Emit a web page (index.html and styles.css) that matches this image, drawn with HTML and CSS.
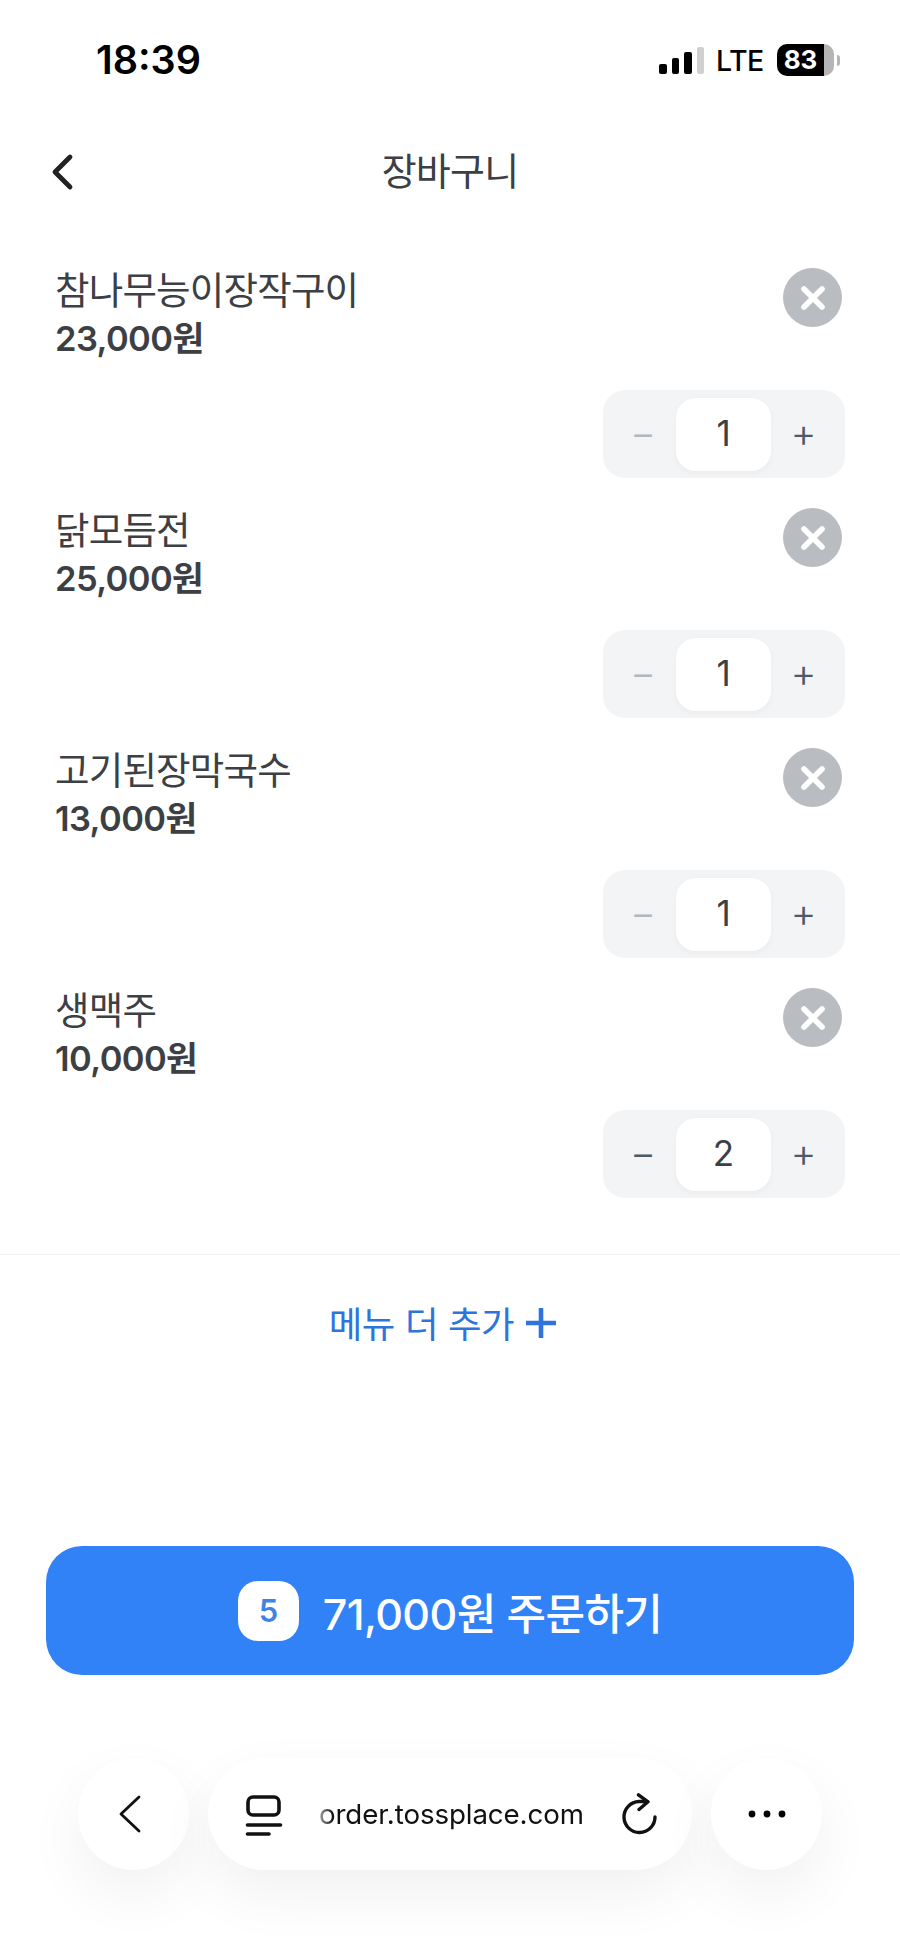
FILE: index.html
```html
<!DOCTYPE html>
<html lang="ko">

<head>
    <meta charset="UTF-8">
    <meta name="viewport" content="width=device-width, initial-scale=1.0">
    <title>장바구니</title>
    <link rel="stylesheet" href="styles.css">
</head>

<body>
    <div class="page">
        <div class="status">
            <span class="time">18:39</span>
            <div class="status-right">
                <div class="signal">
                    <i class="b1"></i><i class="b2"></i><i class="b3"></i><i class="b4"></i>
                </div>
                <span class="lte">LTE</span>
                <div class="battery"><span class="level">83</span></div>
                <div class="nub"></div>
            </div>
        </div>

        <div class="header">
            <svg class="header-back" width="30" height="38" viewBox="0 0 30 38">
                <path d="M24 4 L9 19 L24 34" />
            </svg>
            <h1 class="header-title">장바구니</h1>
        </div>

        <div class="items">
            <div class="item">
                <div class="item-head">
                    <div>
                        <div class="item-name">참나무능이장작구이</div>
                        <div class="item-price">23,000원</div>
                    </div>
                    <div class="remove">
                        <svg width="26" height="26" viewBox="0 0 26 26"><path d="M4 4 L22 22 M22 4 L4 22" /></svg>
                    </div>
                </div>
                <div class="stepper">
                    <span class="step off">−</span>
                    <span class="count">1</span>
                    <span class="step">+</span>
                </div>
            </div>
            <div class="item">
                <div class="item-head">
                    <div>
                        <div class="item-name">닭모듬전</div>
                        <div class="item-price">25,000원</div>
                    </div>
                    <div class="remove">
                        <svg width="26" height="26" viewBox="0 0 26 26"><path d="M4 4 L22 22 M22 4 L4 22" /></svg>
                    </div>
                </div>
                <div class="stepper">
                    <span class="step off">−</span>
                    <span class="count">1</span>
                    <span class="step">+</span>
                </div>
            </div>
            <div class="item">
                <div class="item-head">
                    <div>
                        <div class="item-name">고기된장막국수</div>
                        <div class="item-price">13,000원</div>
                    </div>
                    <div class="remove">
                        <svg width="26" height="26" viewBox="0 0 26 26"><path d="M4 4 L22 22 M22 4 L4 22" /></svg>
                    </div>
                </div>
                <div class="stepper">
                    <span class="step off">−</span>
                    <span class="count">1</span>
                    <span class="step">+</span>
                </div>
            </div>
            <div class="item">
                <div class="item-head">
                    <div>
                        <div class="item-name">생맥주</div>
                        <div class="item-price">10,000원</div>
                    </div>
                    <div class="remove">
                        <svg width="26" height="26" viewBox="0 0 26 26"><path d="M4 4 L22 22 M22 4 L4 22" /></svg>
                    </div>
                </div>
                <div class="stepper">
                    <span class="step">−</span>
                    <span class="count">2</span>
                    <span class="step">+</span>
                </div>
            </div>
        </div>

        <div class="more">
            <span>메뉴 더 추가</span>
            <svg width="30" height="30" viewBox="0 0 30 30"><path d="M1 15 H29 M15 1 V29" /></svg>
        </div>

        <div class="order">
            <span class="order-badge">5</span>
            <span>71,000원 주문하기</span>
        </div>

        <div class="browser">
            <div class="round">
                <svg class="thin nav-back" width="24" height="38" viewBox="0 0 24 38"><path d="M21 2 L3 19 L21 36" /></svg>
            </div>
            <div class="url">
                <svg class="tabs" width="38" height="44" viewBox="0 0 38 44">
                    <rect x="3" y="5" width="31" height="18" rx="5" />
                    <path d="M2.5 33 H35.5" />
                    <path d="M2.5 42 H24" />
                </svg>
                <span class="url-text">order.tossplace.com</span>
                <svg class="reload" width="36" height="42" viewBox="0 0 36 42">
                    <path d="M33 24 A15.5 15.5 0 1 1 17 8.5 L25 8.5" />
                    <path d="M16.5 1.8 L26 8.8 L17 16.5" />
                </svg>
            </div>
            <div class="round">
                <svg width="38" height="8" viewBox="0 0 38 8">
                    <circle cx="4" cy="4" r="3.4" /><circle cx="19" cy="4" r="3.4" /><circle cx="34" cy="4" r="3.4" />
                </svg>
            </div>
        </div>
    </div>
</body>

</html>
```

FILE: styles.css
```css
* {
    box-sizing: border-box;
}

body {
    margin: 0;
    background: #fff;
    font-family: Inter, "Noto Sans CJK KR", sans-serif;
    color: #3c4045;
}

.page {
    width: 900px;
    height: 1948px;
    overflow: hidden;
    display: flex;
    flex-direction: column;
}

/* status bar */
.status {
    height: 120px;
    padding: 40px 60px 0 96px;
    display: flex;
    justify-content: space-between;
    align-items: flex-start;
    color: #000;
}

.time {
    font-size: 39.5px;
    line-height: 40px;
    font-weight: 600;
}

.status-right {
    display: flex;
    align-items: center;
    height: 40px;
}

.signal {
    display: flex;
    align-items: flex-end;
    gap: 5px;
    width: 45px;
    height: 27px;
}

.signal i {
    display: block;
    width: 7.5px;
    border-radius: 2px;
    background: #000;
}

.signal .b1 { height: 10px; }
.signal .b2 { height: 16px; }
.signal .b3 { height: 22px; }
.signal .b4 { height: 27px; background: #d0d0d0; }

.lte {
    margin-left: 12px;
    width: 61px;
    font-size: 28.5px;
    font-weight: 500;
    letter-spacing: -0.5px;
}

.battery {
    width: 57px;
    height: 32px;
    border-radius: 10px;
    overflow: hidden;
    background: linear-gradient(to right, #000 82%, #b5b5b5 82%);
    color: #fff;
    font-size: 26px;
    font-weight: 700;
    line-height: 32px;
}

.level {
    display: block;
    width: 47px;
    text-align: center;
}

.nub {
    width: 3px;
    height: 11px;
    margin-left: 3px;
    border-radius: 0 3px 3px 0;
    background: #b5b5b5;
}

/* header */
.header {
    position: relative;
    height: 104px;
    padding-bottom: 8px;
    display: flex;
    align-items: center;
    justify-content: center;
}

.header-back {
    position: absolute;
    left: 46px;
    top: 33px;
    fill: none;
    stroke: #222;
    stroke-width: 4.8;
    stroke-linecap: round;
    stroke-linejoin: round;
}

.header-title {
    margin: 0;
    font-size: 38px;
    font-weight: 400;
    letter-spacing: -0.8px;
}

/* cart rows */
.items {
    padding: 43px 55px 0 55px;
}

.item {
    height: 240px;
}

.item-head {
    height: 123px;
    display: flex;
    justify-content: space-between;
    align-items: flex-start;
}

.item-name {
    font-size: 37.5px;
    line-height: 48px;
    letter-spacing: -0.8px;
}

.item-price {
    font-size: 34.5px;
    line-height: 48px;
    font-weight: 600;
    letter-spacing: -0.6px;
}

.remove {
    width: 59px;
    height: 59px;
    margin: 1px 3px 0 0;
    border-radius: 50%;
    background: #b9bdc1;
    display: flex;
    align-items: center;
    justify-content: center;
}

.remove svg {
    stroke: #fff;
    stroke-width: 5.6;
    stroke-linecap: round;
}

.stepper {
    width: 242px;
    height: 88px;
    margin-left: auto;
    padding: 8px 0;
    border-radius: 22px;
    background: #f2f4f6;
    display: grid;
    grid-template-columns: 73px 95px 74px;
    align-items: center;
    text-align: center;
}

.step {
    font-size: 40px;
    font-weight: 300;
    line-height: 68px;
    padding-bottom: 4px;
    color: #4e5968;
}

.step:first-child {
    padding-left: 7px;
}

.step:last-child {
    padding-right: 9px;
}

.step.off {
    color: #b0b8c1;
}

.count {
    height: 73px;
    border-radius: 20px;
    background: #fff;
    box-shadow: 0 2px 6px rgba(0, 0, 0, 0.04);
    font-size: 35px;
    line-height: 70px;
}

/* add more */
.more {
    margin-top: 27px;
    height: 136px;
    padding-right: 15px;
    border-top: 1px solid #eeeff1;
    display: flex;
    align-items: center;
    justify-content: center;
    gap: 12px;
    color: #2f74dc;
    font-size: 36.5px;
    letter-spacing: -0.4px;
}

.more svg {
    stroke: #2f74dc;
    stroke-width: 4.6;
    stroke-linecap: round;
}

/* order button */
.order {
    width: 808px;
    height: 129px;
    margin: 156px 0 0 46px;
    border-radius: 36px;
    background: #3182f6;
    color: #fff;
    display: flex;
    align-items: center;
    justify-content: center;
    gap: 24px;
    font-size: 43px;
    font-weight: 500;
    letter-spacing: -0.6px;
}

.order-badge {
    width: 61px;
    height: 60px;
    border-radius: 20px;
    background: #fff;
    color: #3f84e5;
    font-size: 31px;
    font-weight: 600;
    line-height: 60px;
    text-align: center;
}

/* browser toolbar */
.browser {
    margin: 83px 0 0 78px;
    display: flex;
    gap: 19px;
}

.round {
    width: 111px;
    height: 112px;
    border-radius: 50%;
    background: #fff;
    box-shadow: 0 24px 60px rgba(0, 0, 0, 0.06);
    display: flex;
    align-items: center;
    justify-content: center;
}

.url {
    width: 484px;
    height: 112px;
    padding: 0 32px 0 37px;
    border-radius: 56px;
    background: #fff;
    box-shadow: 0 24px 60px rgba(0, 0, 0, 0.06);
    display: flex;
    align-items: center;
    color: #111;
}

.url-text {
    width: 268px;
    margin-left: 36px;
    font-size: 27.7px;
    letter-spacing: -0.1px;
    white-space: nowrap;
    -webkit-mask-image: linear-gradient(to right, rgba(0, 0, 0, 0.4), #000 14px);
    mask-image: linear-gradient(to right, rgba(0, 0, 0, 0.4), #000 14px);
}

.tabs {
    fill: none;
    stroke: #111;
    stroke-width: 3.6;
    stroke-linecap: round;
}

.thin {
    fill: none;
    stroke: #111;
    stroke-width: 2.8;
    stroke-linecap: round;
    stroke-linejoin: round;
}

.nav-back {
    margin-right: 7px;
}

.reload {
    margin-left: 35px;
    flex: none;
    fill: none;
    stroke: #111;
    stroke-width: 3.4;
    stroke-linecap: round;
    stroke-linejoin: round;
}
```
